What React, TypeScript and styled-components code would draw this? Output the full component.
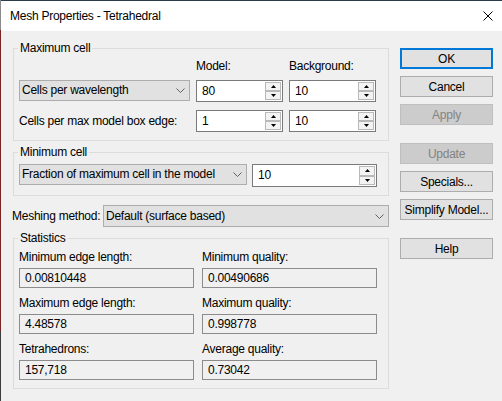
import React from 'react';
import styled, { createGlobalStyle } from 'styled-components';

const GlobalStyle = createGlobalStyle`
  html, body {
    margin: 0;
    padding: 0;
    background: #f0f0f0;
  }
  * {
    box-sizing: border-box;
  }
`;

const Window = styled.div`
  width: 502px;
  height: 401px;
  background: #f0f0f0;
  border-left: 1px solid;
  border-image: linear-gradient(to bottom, #8a8a8a 0 31px, #7a2323 31px 330px, #3c3c3c 330px) 1;
  font-family: 'Liberation Sans', Arial, sans-serif;
  font-size: 12px;
  letter-spacing: -0.25px;
  color: #000;
  overflow: hidden;
`;

const TitleBar = styled.div`
  height: 31px;
  background: #fff;
  border-top: 1px solid #2b3d4b;
  display: flex;
  align-items: center;
  justify-content: space-between;
  padding: 0 8px 0 9px;
`;

const TitleText = styled.span`
  font-size: 12px;
  line-height: 15px;
`;

const CloseIcon = styled.svg`
  width: 10px;
  height: 10px;
  margin-right: 1px;
`;

const Body = styled.div`
  display: flex;
  gap: 11px;
  padding: 17px 0 0 11px;
`;

const MainColumn = styled.div`
  width: 377px;
  display: flex;
  flex-direction: column;
`;

const GroupBox = styled.div<{ $gap?: number }>`
  position: relative;
  border: 1px solid #dcdcdc;
  margin: ${p => p.$gap ?? 0}px 0 0 1px;
`;

const Legend = styled.span`
  position: absolute;
  left: 4px;
  top: -8px;
  padding: 0 2px;
  line-height: 15px;
  background: #f0f0f0;
`;

const MaxCellGrid = styled.div`
  display: grid;
  grid-template-columns: 171px 87px 87px;
  grid-template-rows: 13px 22px 22px;
  column-gap: 6px;
  row-gap: 8px;
  padding: 10px 0 8px 5px;
`;

const ColumnHeader = styled.span`
  line-height: 15px;
  white-space: nowrap;
`;

const RowLabel = styled.span`
  align-self: center;
  line-height: 15px;
  white-space: nowrap;
`;

const MinCellRow = styled.div`
  display: grid;
  grid-template-columns: 228px 125px;
  column-gap: 5px;
  align-items: start;
  padding: 11px 0 8px 5px;
`;

const ComboBox = styled.div<{ $height?: number }>`
  height: ${p => p.$height ?? 21}px;
  background: #e1e1e1;
  border: 1px solid #adadad;
  display: flex;
  align-items: center;
  justify-content: space-between;
  padding: 0 4px 0 2px;
`;

const ComboText = styled.span`
  line-height: 15px;
  white-space: nowrap;
`;

const Chevron = styled.svg`
  width: 9px;
  height: 5px;
  flex: none;
`;

const SpinEdit = styled.div<{ $height?: number }>`
  height: ${p => p.$height ?? 22}px;
  background: #fff;
  border: 1px solid #7a7a7a;
  display: flex;
  align-items: stretch;
`;

const SpinValue = styled.span`
  flex: 1;
  display: flex;
  align-items: center;
  padding-left: 5px;
  line-height: 15px;
`;

const SpinButtons = styled.div`
  width: 18px;
  display: flex;
  flex-direction: column;
  padding: 1px;
`;

const SpinButton = styled.div`
  flex: 1;
  display: flex;
  align-items: center;
  justify-content: center;
  background: #f3f3f3;
  border: 1px solid #b9b9b9;
`;

const MeshingRow = styled.div`
  display: flex;
  align-items: center;
  margin-top: 9px;
`;

const MeshingLabel = styled.span`
  width: 91px;
  line-height: 15px;
  white-space: nowrap;
`;

const MeshingCombo = styled(ComboBox)`
  flex: 1;
`;

const StatsGrid = styled.div`
  display: grid;
  grid-template-columns: 175px 175px;
  column-gap: 8px;
  row-gap: 7px;
  padding: 10px 0 8px 5px;
`;

const StatCell = styled.div`
  display: flex;
  flex-direction: column;
`;

const StatLabel = styled.span`
  line-height: 16px;
  margin-bottom: 3px;
  white-space: nowrap;
`;

const ReadOnlyField = styled.div`
  height: 20px;
  border: 1px solid #8c8c8c;
  background: #f0f0f0;
  display: flex;
  align-items: center;
  padding-left: 5px;
  line-height: 15px;
`;

const ButtonColumn = styled.div`
  width: 93px;
  display: flex;
  flex-direction: column;
  gap: 7px;
`;

const DialogButton = styled.div<{ $disabled?: boolean; $default?: boolean; $spaced?: boolean }>`
  height: 21px;
  display: flex;
  align-items: center;
  justify-content: center;
  white-space: nowrap;
  background: ${p => (p.$disabled ? '#cccccc' : '#e1e1e1')};
  color: ${p => (p.$disabled ? '#838383' : '#000')};
  border: ${p => (p.$default ? '2px solid #0078d7' : p.$disabled ? '1px solid #bfbfbf' : '1px solid #adadad')};
  margin-top: ${p => (p.$spaced ? 11 : 0)}px;
`;

const ArrowUp = () => (
  <svg width="5" height="3" viewBox="0 0 5 3">
    <path d="M2.5 0 L5 3 L0 3 Z" fill="#000" />
  </svg>
);

const ArrowDown = () => (
  <svg width="5" height="3" viewBox="0 0 5 3">
    <path d="M0 0 L5 0 L2.5 3 Z" fill="#000" />
  </svg>
);

const ChevronIcon = () => (
  <Chevron viewBox="0 0 9 5">
    <path d="M0.5 0.5 L4.5 4.5 L8.5 0.5" fill="none" stroke="#606060" strokeWidth="1" />
  </Chevron>
);

const Spin = ({ value, height }: { value: string; height?: number }) => (
  <SpinEdit $height={height}>
    <SpinValue>{value}</SpinValue>
    <SpinButtons>
      <SpinButton><ArrowUp /></SpinButton>
      <SpinButton><ArrowDown /></SpinButton>
    </SpinButtons>
  </SpinEdit>
);

const Combo = ({ text }: { text: string }) => (
  <ComboBox>
    <ComboText>{text}</ComboText>
    <ChevronIcon />
  </ComboBox>
);

const stats = [
  { label: 'Minimum edge length:', value: '0.00810448' },
  { label: 'Minimum quality:', value: '0.00490686' },
  { label: 'Maximum edge length:', value: '4.48578' },
  { label: 'Maximum quality:', value: '0.998778' },
  { label: 'Tetrahedrons:', value: '157,718' },
  { label: 'Average quality:', value: '0.73042' },
];

export default function App() {
  return (
    <>
      <GlobalStyle />
      <Window>
        <TitleBar>
          <TitleText>Mesh Properties - Tetrahedral</TitleText>
          <CloseIcon viewBox="0 0 10 10">
            <path d="M0.5 0.5 L9.5 9.5 M9.5 0.5 L0.5 9.5" stroke="#000" strokeWidth="1" />
          </CloseIcon>
        </TitleBar>
        <Body>
          <MainColumn>
            <GroupBox>
              <Legend>Maximum cell</Legend>
              <MaxCellGrid>
                <span />
                <ColumnHeader>Model:</ColumnHeader>
                <ColumnHeader>Background:</ColumnHeader>
                <Combo text="Cells per wavelength" />
                <Spin value="80" />
                <Spin value="10" />
                <RowLabel>Cells per max model box edge:</RowLabel>
                <Spin value="1" />
                <Spin value="10" />
              </MaxCellGrid>
            </GroupBox>

            <GroupBox $gap={11}>
              <Legend>Minimum cell</Legend>
              <MinCellRow>
                <Combo text="Fraction of maximum cell in the model" />
                <Spin value="10" height={23} />
              </MinCellRow>
            </GroupBox>

            <MeshingRow>
              <MeshingLabel>Meshing method:</MeshingLabel>
              <MeshingCombo $height={22}>
                <ComboText>Default (surface based)</ComboText>
                <ChevronIcon />
              </MeshingCombo>
            </MeshingRow>

            <GroupBox $gap={11}>
              <Legend>Statistics</Legend>
              <StatsGrid>
                {stats.map(s => (
                  <StatCell key={s.label}>
                    <StatLabel>{s.label}</StatLabel>
                    <ReadOnlyField>{s.value}</ReadOnlyField>
                  </StatCell>
                ))}
              </StatsGrid>
            </GroupBox>
          </MainColumn>

          <ButtonColumn>
            <DialogButton $default>OK</DialogButton>
            <DialogButton>Cancel</DialogButton>
            <DialogButton $disabled>Apply</DialogButton>
            <DialogButton $disabled $spaced>Update</DialogButton>
            <DialogButton>Specials...</DialogButton>
            <DialogButton>Simplify Model...</DialogButton>
            <DialogButton $spaced>Help</DialogButton>
          </ButtonColumn>
        </Body>
      </Window>
    </>
  );
}
